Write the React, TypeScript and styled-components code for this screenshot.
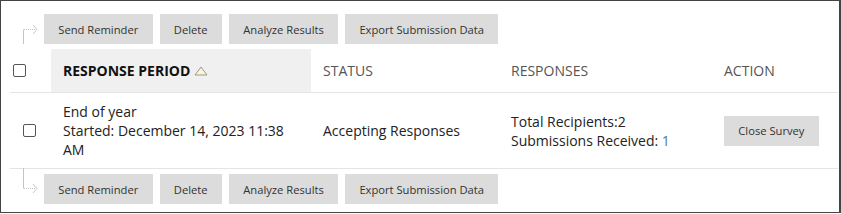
import styled, { createGlobalStyle } from 'styled-components';

const GlobalStyle = createGlobalStyle`
  html, body {
    margin: 0;
    padding: 0;
    background: #fff;
  }
  body {
    font-family: "Open Sans", "Liberation Sans", sans-serif;
  }
`;

const Frame = styled.div`
  box-sizing: border-box;
  width: 841px;
  height: 213px;
  border: 1px solid #444;
  border-right-width: 2px;
  padding: 13px 1px 0 9px;
  background: #fff;
`;

const Toolbar = styled.div<{ $top?: boolean }>`
  display: flex;
  align-items: center;
  height: 30px;
  margin: ${(p) => (p.$top ? '0 0 5px 0' : '5px 0 0 0')};
`;

const ArrowSlot = styled.div`
  width: 34px;
  height: 30px;
  position: relative;
`;

const Buttons = styled.div`
  display: flex;
  gap: 7px;
`;

const Button = styled.button`
  height: 30px;
  border: none;
  background: #dcdcdc;
  color: #333;
  font-family: "Open Sans", "Liberation Sans", sans-serif;
  font-size: 11.2px;
  padding: 0 14.3px;
  cursor: pointer;
`;

const Grid = styled.div`
  display: grid;
  grid-template-columns: 41px 260px 188px 213px 1fr;
`;

const HeadCell = styled.div<{ $sorted?: boolean }>`
  height: 43px;
  display: flex;
  align-items: center;
  padding-left: 12px;
  border-bottom: 1px solid #e4e4e4;
  background: ${(p) => (p.$sorted ? '#f0f0f0' : 'transparent')};
  color: ${(p) => (p.$sorted ? '#111' : '#555')};
  font-weight: ${(p) => (p.$sorted ? 700 : 400)};
  font-size: 14px;
  text-transform: uppercase;
  gap: 4px;
`;

const CheckCell = styled.div<{ $offset: number; $head?: boolean }>`
  display: flex;
  align-items: center;
  padding-left: ${(p) => p.$offset}px;
  border-bottom: 1px solid #e4e4e4;
  height: ${(p) => (p.$head ? '43px' : 'auto')};
`;

const Box = styled.span`
  box-sizing: border-box;
  width: 13px;
  height: 13px;
  border: 1px solid #555;
  border-radius: 2px;
  background: #fff;
`;

const Cell = styled.div`
  display: flex;
  flex-direction: column;
  justify-content: center;
  padding: 9px 12px 9px 12px;
  min-height: 57px;
  border-bottom: 1px solid #e4e4e4;
  color: #222;
  font-size: 14px;
  line-height: 19px;
`;

const Count = styled.span`
  color: #4d7b8c;
`;

const LinkArrow = ({ up }: { up?: boolean }) => (
  <svg
    width="34"
    height="30"
    viewBox="0 0 34 30"
    style={{ position: 'absolute', left: 0, top: up ? 0 : -6 }}
  >
    {up ? (
      <>
        <line x1="13.5" y1="15.5" x2="13.5" y2="36" stroke="#c4c4c4" strokeWidth="1" />
        <line x1="14" y1="15.5" x2="25" y2="15.5" stroke="#c4c4c4" strokeWidth="1" strokeDasharray="1 1" />
        <polyline points="23,11 27,15.5 23,20" fill="none" stroke="#c8c8c8" strokeWidth="1" />
      </>
    ) : (
      <>
        <line x1="13.5" y1="0" x2="13.5" y2="20.5" stroke="#c4c4c4" strokeWidth="1" />
        <line x1="14" y1="20.5" x2="25" y2="20.5" stroke="#c4c4c4" strokeWidth="1" strokeDasharray="1 1" />
        <polyline points="23,16 27,20.5 23,25" fill="none" stroke="#c8c8c8" strokeWidth="1" />
      </>
    )}
  </svg>
);

const SortTriangle = () => (
  <svg width="14" height="10" viewBox="0 0 14 10">
    <polygon points="7,1 13,9 1,9" fill="#fbf3dc" stroke="#9a9a8a" strokeWidth="1" />
  </svg>
);

const ActionBar = ({ top }: { top?: boolean }) => (
  <Toolbar $top={top}>
    <ArrowSlot>
      <LinkArrow up={top} />
    </ArrowSlot>
    <Buttons>
      <Button>Send Reminder</Button>
      <Button>Delete</Button>
      <Button>Analyze Results</Button>
      <Button>Export Submission Data</Button>
    </Buttons>
  </Toolbar>
);

const App = () => (
  <>
    <GlobalStyle />
    <Frame>
      <ActionBar top />
      <Grid>
        <CheckCell $offset={3} $head>
          <Box />
        </CheckCell>
        <HeadCell $sorted>
          Response Period <SortTriangle />
        </HeadCell>
        <HeadCell>Status</HeadCell>
        <HeadCell>Responses</HeadCell>
        <HeadCell>Action</HeadCell>

        <CheckCell $offset={13}>
          <Box />
        </CheckCell>
        <Cell>
          <div>End of year</div>
          <div>Started: December 14, 2023 11:38 AM</div>
        </Cell>
        <Cell>Accepting Responses</Cell>
        <Cell>
          <div>Total Recipients:2</div>
          <div>
            Submissions Received: <Count>1</Count>
          </div>
        </Cell>
        <Cell>
          <div>
            <Button>Close Survey</Button>
          </div>
        </Cell>
      </Grid>
      <ActionBar />
    </Frame>
  </>
);

export default App;
